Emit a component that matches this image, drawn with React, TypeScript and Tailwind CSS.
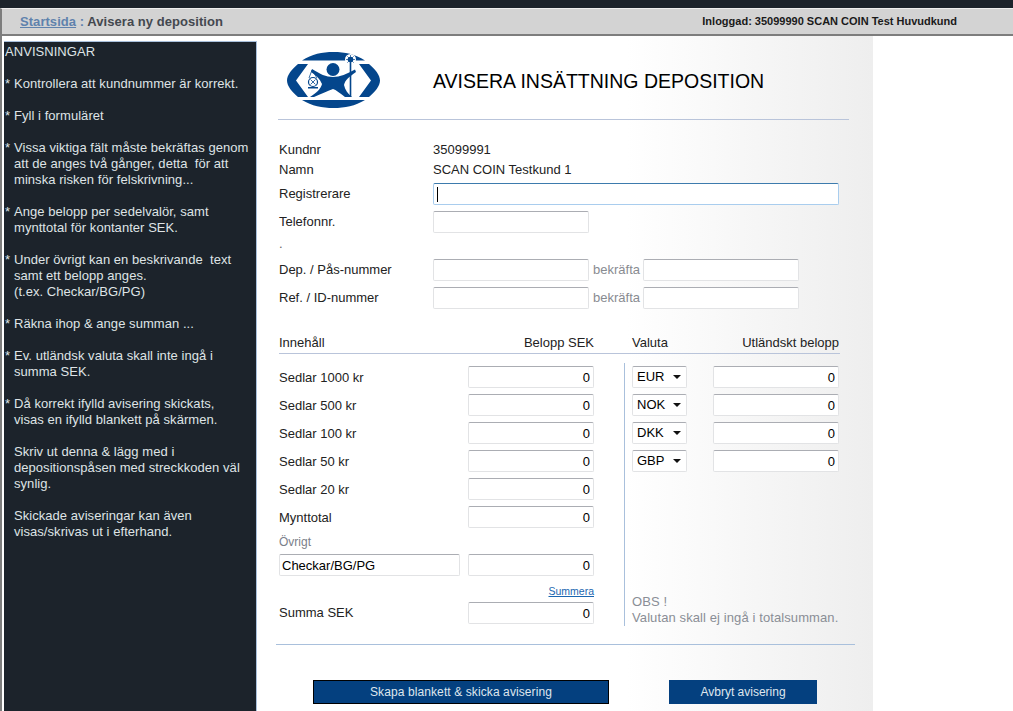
import { ReactNode } from 'react'

const instructions: string[][] = [
  ['Kontrollera att kundnummer är korrekt.'],
  ['Fyll i formuläret'],
  ['Vissa viktiga fält måste bekräftas genom', 'att de anges två gånger, detta  för att', 'minska risken för felskrivning...'],
  ['Ange belopp per sedelvalör, samt', 'mynttotal för kontanter SEK.'],
  ['Under övrigt kan en beskrivande  text', 'samt ett belopp anges.', '(t.ex. Checkar/BG/PG)'],
  ['Räkna ihop & ange summan ...'],
  ['Ev. utländsk valuta skall inte ingå i', 'summa SEK.'],
  ['Då korrekt ifylld avisering skickats,', 'visas en ifylld blankett på skärmen.'],
]

const notes: string[][] = [
  ['Skriv ut denna & lägg med i', 'depositionspåsen med streckkoden väl', 'synlig.'],
  ['Skickade aviseringar kan även', 'visas/skrivas ut i efterhand.'],
]

const amounts = ['Sedlar 1000 kr', 'Sedlar 500 kr', 'Sedlar 100 kr', 'Sedlar 50 kr', 'Sedlar 20 kr', 'Mynttotal']
const currencies = ['EUR', 'NOK', 'DKK', 'GBP']

function Field({ value = '', className = '', right = false }: { value?: string; className?: string; right?: boolean }) {
  return (
    <input
      readOnly
      value={value}
      className={`h-[22px] rounded-[2px] border border-[#e2e3e5] border-t-[#abadb3] bg-white px-[2px] text-[13px] text-black outline-none ${right ? 'pr-[3px] text-right' : ''} ${className}`}
    />
  )
}

function Row({ label, children, className = '' }: { label: string; children?: ReactNode; className?: string }) {
  return (
    <div className={`flex h-[22px] items-center ${className}`}>
      <span className="w-[154px] shrink-0">{label}</span>
      {children}
    </div>
  )
}

function Logo() {
  return (
    <svg width="93" height="56" viewBox="0 0 93 56" fill="#04468c" className="shrink-0">
      <path d="M15 8.500C25 2 35 0 46.500 0C58 0 68 2 78 8.500Z" />
      <path d="M15 48C25 54 35 56 46.500 56C58 56 68 54 78 48Z" />
      <path d="M21 12H11C5 17 0 23 0 28.500C0 34 5 40 11 45H21L9 28.500Z" />
      <path d="M72 12H82C88 17 93 23 93 28.500C93 34 88 40 82 45H72L84 28.500Z" />
      <circle cx="46" cy="17.500" r="6.500" />
      <path d="M25 17C33 22 39 25 46 25C53 25 60 22 68 17.500L69 20C62 25 58 28 57 33C58 38 61 42 65 45H58C53 41 49 38 46 37C40 39 34 42 27 45H23C29 41 34 37 35 32C33 27 29 23 24 20Z" />
      <circle cx="63.500" cy="7.500" r="5.500" fill="#ffffff" />
      <rect x="62.700" y="8" width="1.600" height="37" />
      <circle cx="63.500" cy="7.500" r="2.800" />
      <path d="M63.500 3V12M59 7.500H68M60.300 4.300L66.700 10.700M66.700 4.300L60.300 10.700" stroke="#04468c" strokeWidth="0.700" fill="none" />
      <path d="M25 18L22 26M25 18L30 26" stroke="#04468c" strokeWidth="0.800" fill="none" />
      <circle cx="26" cy="30" r="4.500" fill="#ffffff" stroke="#04468c" strokeWidth="1.200" />
      <path d="M23.500 27.500L28.500 32.500M28.500 27.500L23.500 32.500" stroke="#04468c" strokeWidth="0.800" />
      <rect x="21" y="35" width="10" height="1.500" />
    </svg>
  )
}

export default function App() {
  return (
    <div className="flex h-[711px] w-[1013px] flex-col overflow-hidden bg-white font-['Liberation_Sans',Arial,sans-serif] text-[13px] text-[#222222]">
      <div className="h-2 shrink-0 bg-[#1c232b]" />
      <div className="flex h-[28px] shrink-0 items-center justify-between border-b-2 border-l-2 border-[#7d7d7d] border-t border-t-[#eeeeee] bg-[#d3d3d3]">
        <div className="ml-[18px] text-[13px] font-bold tracking-[0.05px] text-[#44484f]">
          <a className="text-[#5f82ad] underline">Startsida</a>
          <span className="text-[#5f82ad]"> : </span>
          Avisera ny deposition
        </div>
        <div className="mr-[56px] text-[11px] font-bold text-[#1a1a1a]">Inloggad: 35099990 SCAN COIN Test Huvudkund</div>
      </div>

      <div className="flex min-h-0 flex-1">
        <div className="w-[4px] shrink-0 border-l-2 border-[#7d7d7d]" />
        <aside className="mt-[5px] w-[253px] shrink-0 border-r border-t border-[#a9c0dc] bg-[#1c232b] pl-px text-[13px] leading-[16px] tracking-[0.05px] text-[#dfe3e6]">
          <p className="mb-[1px] mt-[2px]">ANVISNINGAR</p>
          {instructions.map(lines => (
            <div key={lines[0]} className="mt-[16px] flex whitespace-pre">
              <span className="w-[9px] shrink-0">*</span>
              <div>
                {lines.map(l => (
                  <div key={l}>{l}</div>
                ))}
              </div>
            </div>
          ))}
          {notes.map(lines => (
            <div key={lines[0]} className="mt-[16px] pl-[9px]">
              {lines.map(l => (
                <div key={l}>{l}</div>
              ))}
            </div>
          ))}
        </aside>

        <main className="w-[616px] shrink-0 bg-linear-to-r from-white from-[60%] to-[#eeeeee] pl-[22px]">
          <div className="flex h-[84px] w-[571px] -translate-x-px items-start border-b border-[#b9c4da] pl-[9px] pt-[16px]">
            <Logo />
            <h1 className="ml-[53px] mt-[18px] whitespace-nowrap text-[19.5px] font-normal leading-[22px] text-black">AVISERA INSÄTTNING DEPOSITION</h1>
          </div>

          <div className="mt-[20px] flex h-[20px] items-center">
            <span className="w-[154px]">Kundnr</span>
            <span>35099991</span>
          </div>
          <div className="flex h-[20px] items-center">
            <span className="w-[154px]">Namn</span>
            <span>SCAN COIN Testkund 1</span>
          </div>
          <Row label="Registrerare" className="mt-[3px]">
            <div className="flex h-[22px] w-[406px] items-center rounded-[2px] border border-[#a9cdee] border-t-[#3d7bad] bg-white pl-[3px]">
              <span className="h-[15px] w-px bg-black" />
            </div>
          </Row>
          <Row label="Telefonnr." className="mt-[6px]">
            <Field className="w-[156px]" />
          </Row>
          <div className="mt-[1px] h-[25px] leading-[20px] text-[#666666]">.</div>
          <Row label="Dep. / Pås-nummer">
            <Field className="w-[156px]" />
            <span className="ml-[4px] w-[50px] text-[13px] text-[#888b91]">bekräfta</span>
            <Field className="w-[156px]" />
          </Row>
          <Row label="Ref. / ID-nummer" className="mt-[6px]">
            <Field className="w-[156px]" />
            <span className="ml-[4px] w-[50px] text-[13px] text-[#888b91]">bekräfta</span>
            <Field className="w-[156px]" />
          </Row>

          <div className="mt-[25px] flex h-[20px] w-[561px] items-center border-b border-[#b9c4da] pb-[2px]">
            <span className="w-[189px]">Innehåll</span>
            <span className="w-[126px] text-right">Belopp SEK</span>
            <span className="ml-[38px] w-[60px]">Valuta</span>
            <span className="flex-1 pr-px text-right">Utländskt belopp</span>
          </div>

          <div className="mt-[12px] flex">
            <div className="w-[315px]">
              {amounts.map(label => (
                <div key={label} className="mb-[6px] flex h-[22px] items-center justify-between">
                  <span className="pt-[2px]">{label}</span>
                  <Field value="0" right className="w-[126px]" />
                </div>
              ))}
              <div className="-mt-[1px] h-[17px] text-[12px] text-[#7b808a]">Övrigt</div>
              <div className="mt-[4px] flex justify-between">
                <Field value="Checkar/BG/PG" className="w-[181px]" />
                <Field value="0" right className="w-[126px]" />
              </div>
              <div className="mt-[8px] h-[18px] text-right text-[10.5px] leading-[14px] text-[#1a66b0] underline">Summera</div>
              <div className="flex h-[22px] items-center justify-between">
                <span>Summa SEK</span>
                <Field value="0" right className="w-[126px]" />
              </div>
            </div>

            <div className="-mt-[3px] ml-[30px] flex h-[263px] w-[215px] flex-col border-l border-[#a9c0dc] pl-[7px]">
              <div className="mt-[3px]">
                {currencies.map(cur => (
                  <div key={cur} className="mb-[6px] flex h-[22px] justify-between">
                    <div className="flex h-[22px] w-[55px] items-center justify-between rounded-[2px] border border-[#e2e3e5] border-t-[#abadb3] bg-white pl-[4px] pr-[5px] text-black">
                      <span>{cur}</span>
                      <svg width="8" height="4" viewBox="0 0 8 4">
                        <path d="M0 0H8L4 4Z" fill="#111111" />
                      </svg>
                    </div>
                    <Field value="0" right className="w-[126px]" />
                  </div>
                ))}
              </div>
              <div className="mt-auto leading-[16px] tracking-[0.1px] text-[#8a8e96]">
                <div>OBS !</div>
                <div className="whitespace-nowrap">Valutan skall ej ingå i totalsumman.</div>
              </div>
            </div>
          </div>

          <div className="-ml-[3px] mt-[18px] h-px w-[579px] bg-[#a9c0dc]" />

          <div className="mt-[35px] flex">
            <button className="ml-[34px] h-[24px] w-[296px] border border-black bg-[#04407f] text-[12px] tracking-[0.1px] text-[#dfe6ee]">
              Skapa blankett &amp; skicka avisering
            </button>
            <button className="ml-[60px] h-[24px] w-[148px] bg-[#04407f] text-[12px] text-[#dfe6ee]">Avbryt avisering</button>
          </div>
        </main>
      </div>
    </div>
  )
}
